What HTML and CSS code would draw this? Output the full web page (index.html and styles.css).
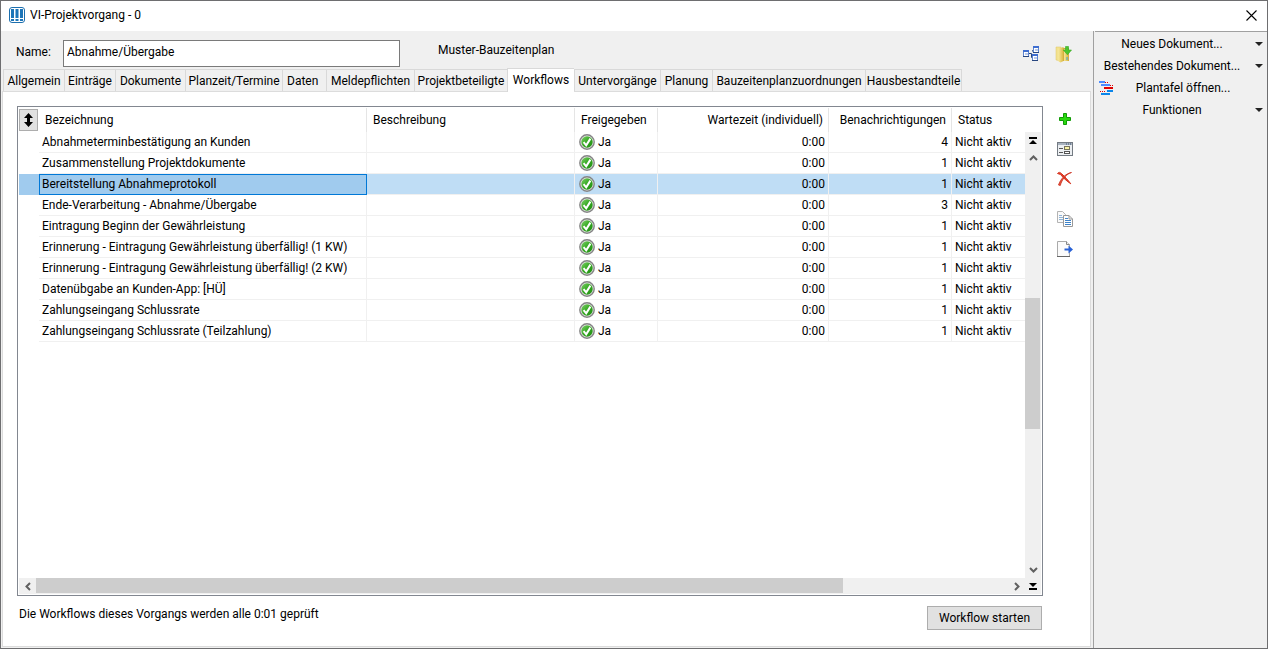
FILE: index.html
```
<!DOCTYPE html>
<html lang="de">
<head>
    <meta charset="UTF-8">
    <meta name="viewport" content="width=device-width, initial-scale=1.0">
    <title>VI-Projektvorgang - 0</title>
    <link rel="stylesheet" href="styles.css">
</head>
<body>
    <svg width="0" height="0" class="defs">
        <defs>
            <linearGradient id="green" x1="0" y1="0" x2="1" y2="1">
                <stop offset="0" stop-color="#7fd06a"/>
                <stop offset="0.5" stop-color="#35a822"/>
                <stop offset="1" stop-color="#1f8a12"/>
            </linearGradient>
            <linearGradient id="folder" x1="0" y1="0" x2="1" y2="0">
                <stop offset="0" stop-color="#f6e79a"/>
                <stop offset="1" stop-color="#d9b640"/>
            </linearGradient>
            <symbol id="check" viewBox="0 0 16 16">
                <circle cx="8" cy="8" r="7.2" fill="#e4e4e4" stroke="#858585" stroke-width="1.4"/>
                <circle cx="8" cy="8" r="5.7" fill="url(#green)"/>
                <path d="M4.6 8.2L7.2 11.4L11.4 4.6" fill="none" stroke="#fff" stroke-width="2"/>
            </symbol>
        </defs>
    </svg>
    <div class="window">
        <header class="titlebar">
            <svg class="logo" width="16" height="16" viewBox="0 0 16 16">
                <rect x="0.5" y="0.5" width="15" height="15" rx="2.5" fill="#fff" stroke="#1c6fae"/>
                <path d="M2 2h3v9H2zM6.500 2h3v9h-3zM11 2h3v9h-3zM2 12h3v2H2zM6.500 12h3v2h-3zM11 12h3v2h-3z" fill="#1c75b8"/>
            </svg>
            <h1>VI-Projektvorgang - 0</h1>
            <button class="close" type="button" aria-label="Schließen">
                <svg width="11" height="11" viewBox="0 0 11 11"><path d="M0.500 0.500L10.500 10.500M10.500 0.500L0.500 10.500" stroke="#000" stroke-width="1.1"/></svg>
            </button>
        </header>

        <div class="content">
            <main class="main">
                <div class="namebar">
                    <label for="name">Name:</label>
                    <input type="text" id="name" value="Abnahme/Übergabe">
                    <span class="plan">Muster-Bauzeitenplan</span>
                    <div class="namebar-icons">
                        <button type="button" aria-label="Struktur">
                            <svg width="17" height="16" viewBox="0 0 17 16">
                                <path d="M6 7.500H8.500M9.500 5.500V4.500H11M8.500 7.500V11.500H10" fill="none" stroke="#27467f"/>
                                <g fill="#fff" stroke="#5d84cf">
                                    <rect x="0.500" y="4.500" width="5" height="6"/>
                                    <rect x="10.500" y="0.500" width="5" height="6"/>
                                    <rect x="9.500" y="8.500" width="5" height="6"/>
                                </g>
                                <path d="M0 4h6v2H0zM10 0h6v2h-6zM9 8h6v2H9z" fill="#3f6ed0"/>
                                <path d="M2 7h3v2H2zM12 3h3v2h-3zM11 11h3v2h-3z" fill="#b9caec"/>
                                <path d="M0 10.500h6M10 6.500h6M9 14.500h6" stroke="#27467f"/>
                            </svg>
                        </button>
                        <button type="button" aria-label="Ordner hinzufügen">
                            <svg width="17" height="17" viewBox="0 0 17 17">
                                <path d="M1 1h5v14l-5-1z" fill="#f3e28f" stroke="#dfc565" stroke-width="0.500"/>
                                <path d="M6 2h8v13H6z" fill="#cda93a"/>
                                <path d="M3.500 2.500l5-1.500v14l-3 1.500-2-1z" fill="url(#folder)"/>
                                <path d="M9 3h4.500v12H9z" fill="url(#folder)"/>
                                <path d="M12 11v3" stroke="#3aa6dd"/>
                                <path d="M10.500 0.500h3v3.500H16.500L12.500 8.800 8.300 4h2.200z" fill="#4bc52f" stroke="#39ab22" stroke-width="0.600"/>
                            </svg>
                        </button>
                    </div>
                </div>

                <nav class="tabs">
                    <button type="button">Allgemein</button>
                    <button type="button">Einträge</button>
                    <button type="button">Dokumente</button>
                    <button type="button">Planzeit/Termine</button>
                    <button type="button" class="left">Daten</button>
                    <button type="button">Meldepflichten</button>
                    <button type="button">Projektbeteiligte</button>
                    <button type="button" class="active">Workflows</button>
                    <button type="button">Untervorgänge</button>
                    <button type="button">Planung</button>
                    <button type="button">Bauzeitenplanzuordnungen</button>
                    <button type="button">Hausbestandteile</button>
                </nav>

                <section class="panel">
                    <div class="work">
                        <div class="list">
                            <table>
                                <colgroup>
                                    <col class="c-mark">
                                    <col class="c-name">
                                    <col class="c-desc">
                                    <col class="c-free">
                                    <col class="c-wait">
                                    <col class="c-note">
                                    <col>
                                </colgroup>
                                <thead>
                                    <tr>
                                        <th class="mark">
                                            <button type="button" class="sort" aria-label="Sortierung">
                                                <svg width="9" height="14" viewBox="0 0 9 14"><path d="M4.500 0L9 5H6v4h3l-4.500 5L0 9h3V5H0z"/></svg>
                                            </button>
                                        </th>
                                        <th>Bezeichnung</th>
                                        <th>Beschreibung</th>
                                        <th>Freigegeben</th>
                                        <th class="num">Wartezeit (individuell)</th>
                                        <th class="num">Benachrichtigungen</th>
                                        <th>Status</th>
                                    </tr>
                                </thead>
                                <tbody>
                                    <tr><td></td><td>Abnahmeterminbestätigung an Kunden</td><td></td><td><svg class="ok"><use href="#check"/></svg>Ja</td><td class="num">0:00</td><td class="num">4</td><td>Nicht aktiv</td></tr>
                                    <tr><td></td><td>Zusammenstellung Projektdokumente</td><td></td><td><svg class="ok"><use href="#check"/></svg>Ja</td><td class="num">0:00</td><td class="num">1</td><td>Nicht aktiv</td></tr>
                                    <tr class="selected"><td></td><td>Bereitstellung Abnahmeprotokoll</td><td></td><td><svg class="ok"><use href="#check"/></svg>Ja</td><td class="num">0:00</td><td class="num">1</td><td>Nicht aktiv</td></tr>
                                    <tr><td></td><td>Ende-Verarbeitung - Abnahme/Übergabe</td><td></td><td><svg class="ok"><use href="#check"/></svg>Ja</td><td class="num">0:00</td><td class="num">3</td><td>Nicht aktiv</td></tr>
                                    <tr><td></td><td>Eintragung Beginn der Gewährleistung</td><td></td><td><svg class="ok"><use href="#check"/></svg>Ja</td><td class="num">0:00</td><td class="num">1</td><td>Nicht aktiv</td></tr>
                                    <tr><td></td><td>Erinnerung - Eintragung Gewährleistung überfällig! (1 KW)</td><td></td><td><svg class="ok"><use href="#check"/></svg>Ja</td><td class="num">0:00</td><td class="num">1</td><td>Nicht aktiv</td></tr>
                                    <tr><td></td><td>Erinnerung - Eintragung Gewährleistung überfällig! (2 KW)</td><td></td><td><svg class="ok"><use href="#check"/></svg>Ja</td><td class="num">0:00</td><td class="num">1</td><td>Nicht aktiv</td></tr>
                                    <tr><td></td><td>Datenübgabe an Kunden-App: [HÜ]</td><td></td><td><svg class="ok"><use href="#check"/></svg>Ja</td><td class="num">0:00</td><td class="num">1</td><td>Nicht aktiv</td></tr>
                                    <tr><td></td><td>Zahlungseingang Schlussrate</td><td></td><td><svg class="ok"><use href="#check"/></svg>Ja</td><td class="num">0:00</td><td class="num">1</td><td>Nicht aktiv</td></tr>
                                    <tr><td></td><td>Zahlungseingang Schlussrate (Teilzahlung)</td><td></td><td><svg class="ok"><use href="#check"/></svg>Ja</td><td class="num">0:00</td><td class="num">1</td><td>Nicht aktiv</td></tr>
                                </tbody>
                            </table>

                            <div class="vscroll">
                                <button type="button" aria-label="Zum Anfang"><svg width="8" height="8" viewBox="0 0 8 8"><path d="M0 0h8v2H0zM4 3l4 4H0z"/></svg></button>
                                <button type="button" aria-label="Nach oben"><svg width="9" height="6" viewBox="0 0 9 6"><path d="M1 5l3.500-3.500L8 5" class="arrow"/></svg></button>
                                <div class="vtrack"><div class="vthumb"></div></div>
                                <button type="button" aria-label="Nach unten"><svg width="9" height="6" viewBox="0 0 9 6"><path d="M1 1l3.500 3.500L8 1" class="arrow"/></svg></button>
                            </div>
                            <div class="hscroll">
                                <button type="button" aria-label="Nach links"><svg width="6" height="9" viewBox="0 0 6 9"><path d="M5 1L1.500 4.500L5 8" class="arrow"/></svg></button>
                                <div class="htrack"><div class="hthumb"></div></div>
                                <button type="button" aria-label="Nach rechts"><svg width="6" height="9" viewBox="0 0 6 9"><path d="M1 1l3.500 3.500L1 8" class="arrow"/></svg></button>
                            </div>
                            <button type="button" class="corner" aria-label="Zum Ende"><svg width="8" height="8" viewBox="0 0 8 8"><path d="M0 6h8v2H0zM4 5l4-4H0z"/></svg></button>
                        </div>

                        <div class="tools">
                            <button type="button" aria-label="Neu">
                                <svg width="16" height="16" viewBox="0 0 16 16"><path d="M6.500 2.500h3v4h4v3h-4v4h-3v-4h-4v-3h4z" fill="#29d80f" stroke="#119a06"/></svg>
                            </button>
                            <button type="button" aria-label="Bearbeiten">
                                <svg width="16" height="16" viewBox="0 0 16 16">
                                    <rect x="0.500" y="1.500" width="15" height="13" fill="#eceff2" stroke="#747b83"/>
                                    <path d="M1 2h14v2H1z" fill="#a9b3bf"/>
                                    <path d="M9 3h1M11 3h1M13 3h1" stroke="#38506e"/>
                                    <path d="M2 7.500h4M2 11.500h4" stroke="#555"/>
                                    <rect x="7.500" y="5.500" width="5" height="3" fill="#f8f3a5" stroke="#77735c"/>
                                    <rect x="7.500" y="10.500" width="5" height="2" fill="#fff" stroke="#555"/>
                                </svg>
                            </button>
                            <button type="button" aria-label="Löschen">
                                <svg width="16" height="16" viewBox="0 0 16 16">
                                    <path d="M0.500 2.500C2 0.500 3.500 1.500 5 3C8 6 11 9 13.800 12.800C10 10.500 6 6.500 3.500 3.500Z" fill="#e5402a" stroke="#d53420"/>
                                    <path d="M14.500 1.500C9.500 3 5 8 3.300 14.500L1.500 14C3.500 8 8.500 2.500 14.500 1.500Z" fill="#e8563f" stroke="#c92c1c" stroke-width="0.800"/>
                                </svg>
                            </button>
                            <button type="button" class="gap" aria-label="Kopieren">
                                <svg width="16" height="16" viewBox="0 0 16 16">
                                    <path d="M0.500 0.500h5l3 3v8h-8z" fill="#fafafa" stroke="#b3b3b3"/>
                                    <path d="M2 4.500h3M2 6.500h5M2 8.500h5" stroke="#8fb4d8"/>
                                    <path d="M6.500 4.500h5.500l3.500 3.500v7.500h-9z" fill="#fff" stroke="#999"/>
                                    <path d="M12 4.500v3.500h3.500" fill="none" stroke="#999"/>
                                    <path d="M8 7.500h3M8 9.500h6M8 11.500h6M8 13.500h6" stroke="#3f83c8"/>
                                </svg>
                            </button>
                            <button type="button" aria-label="Exportieren">
                                <svg width="16" height="16" viewBox="0 0 16 16">
                                    <path d="M0.500 0.500h9l3 3v12h-12z" fill="#fbfbfb" stroke="#aaa"/>
                                    <path d="M9.500 0.500v3h3" fill="#eee" stroke="#888"/>
                                    <path d="M0 15.500h13" stroke="#666"/>
                                    <path d="M7.500 7.500h4v-3l4.500 4-4.500 4v-3h-4z" fill="#2861d6"/>
                                </svg>
                            </button>
                        </div>
                    </div>

                    <footer class="bottom">
                        <span>Die Workflows dieses Vorgangs werden alle 0:01 geprüft</span>
                        <button type="button" class="start">Workflow starten</button>
                    </footer>
                </section>
            </main>

            <aside class="side">
                <button type="button"><i></i><span>Neues Dokument...</span><i class="drop"></i></button>
                <button type="button"><i></i><span>Bestehendes Dokument...</span><i class="drop"></i></button>
                <button type="button" class="board">
                    <svg width="16" height="16" viewBox="0 0 16 16">
                        <path d="M0 1h6v2H0zM2 4h9v2H2z" fill="#4d8dff"/>
                        <path d="M6 2.500h1M8 2.500h1M11 5.500h1M13 5.500h1M1 11.500h1M3 11.500h1M5 11.500h1" stroke="#e00000"/>
                        <path d="M5 7h9v2H5z" fill="#e00000"/>
                        <path d="M8 10h6v2H8zM2 13h9v2H2z" fill="#0b86ea"/>
                    </svg>
                    <span>Plantafel öffnen...</span><i></i>
                </button>
                <button type="button"><i></i><span>Funktionen</span><i class="drop"></i></button>
            </aside>
        </div>
    </div>
</body>
</html>
```
FILE: styles.css
```
* {
    box-sizing: border-box;
}

body {
    margin: 0;
    font-family: Roboto, "Open Sans", sans-serif;
    font-size: 12px;
    line-height: 16px;
    color: #000;
}

button {
    font: inherit;
    color: inherit;
    border: 0;
    padding: 0;
    background: none;
}

svg {
    display: block;
    flex: none;
}

.defs {
    position: absolute;
}

.window {
    display: flex;
    flex-direction: column;
    min-height: 100vh;
    border: 1px solid #6e6e70;
    background: #f0f0f0;
}

.titlebar {
    display: flex;
    align-items: center;
    height: 30px;
    padding: 0 10px 2px 8px;
    background: #fff;
}

.titlebar h1 {
    flex: 1;
    margin: 0 0 0 5px;
    font-size: 12px;
    font-weight: normal;
}

.content {
    display: flex;
    flex: 1;
}

.main {
    display: flex;
    flex-direction: column;
    flex: 1;
    min-width: 0;
    padding: 0 2px 1px 1px;
    border-right: 1px solid #a0a0a0;
}

/* Kopfzeile */
.namebar {
    display: flex;
    align-items: center;
    height: 36px;
    padding: 8px 19px 0 14px;
}

.namebar label {
    width: 47px;
    padding-bottom: 2px;
}

.namebar input {
    width: 337px;
    height: 27px;
    padding: 0 3px 3px;
    border: 1px solid #7a7a7a;
    font: inherit;
}

.plan {
    flex: 1;
    padding: 0 0 6px 38px;
}

.namebar-icons {
    display: flex;
    gap: 15px;
    padding-top: 2px;
}

/* Reiter */
.tabs {
    display: grid;
    grid-template-columns: 61px 51px 70px 97px 44px 88px 93px 67px 86px 52px 153px 97px;
    align-items: end;
    height: 24px;
    padding-left: 1px;
}

.tabs button {
    height: 22px;
    padding-top: 1px;
    border: 1px solid #d9d9d9;
    border-width: 1px 0 0 1px;
    white-space: nowrap;
}

.tabs button:last-child {
    border-right-width: 1px;
}

.tabs .left {
    padding-left: 4px;
    text-align: left;
}

.tabs .active {
    height: 24px;
    padding: 0 0 2px;
    margin-bottom: -1px;
    background: #fff;
    z-index: 1;
}

.panel {
    display: flex;
    flex-direction: column;
    flex: 1;
    padding: 14px 0 0 14px;
    border: 1px solid #dcdcdc;
    background: #fff;
}

.work {
    display: flex;
    flex: 1;
}

/* Liste */
.list {
    display: grid;
    grid-template-columns: 1fr 16px;
    grid-template-rows: 24px 1fr 16px;
    flex: 1;
    min-width: 0;
    padding: 1px;
    border: 1px solid #828790;
}

table {
    grid-area: 1 / 1 / 3 / 2;
    align-self: start;
    width: 100%;
    table-layout: fixed;
    border-collapse: separate;
    border-spacing: 0;
}

.c-mark { width: 20px; }
.c-name { width: 328px; }
.c-desc { width: 208px; }
.c-free { width: 83px; }
.c-wait { width: 171px; }
.c-note { width: 123px; }

th {
    height: 24px;
    padding: 0 5px 0 6px;
    border-right: 1px solid #e5e5e5;
    font-weight: normal;
    text-align: left;
    white-space: nowrap;
}

th:last-child,
th.mark {
    border-right: 0;
}

th.mark {
    padding: 0;
}

.sort {
    display: flex;
    align-items: center;
    justify-content: center;
    width: 19px;
    height: 22px;
    border: 1px solid #adadad;
    background: #e1e1e1;
}

td {
    height: 21px;
    padding: 0 3px;
    border-right: 1px solid #f0f0f0;
    border-bottom: 1px solid #f0f0f0;
    line-height: 20px;
    white-space: nowrap;
}

td:first-child {
    border-color: transparent;
    border-right: 0;
}

td:last-child {
    border-right: 0;
}

th.num,
td.num {
    text-align: right;
}

.ok {
    display: inline-block;
    width: 16px;
    height: 16px;
    margin: 0 3px 0 1px;
    vertical-align: -4px;
}

.selected td {
    background: #bfddf5;
}

.selected td:first-child {
    background: #a0cbee;
}

.selected td:nth-child(2) {
    background: #a0cbee;
    outline: 1px solid #0078d7;
    outline-offset: -1px;
}

/* Bildlaufleisten */
.vscroll,
.hscroll,
.corner {
    background: #f0f0f0;
}

.vscroll button,
.hscroll button,
.corner {
    display: flex;
    align-items: center;
    justify-content: center;
}

.arrow {
    fill: none;
    stroke: #606060;
    stroke-width: 2;
}

.vscroll {
    grid-area: 2 / 2;
    display: flex;
    flex-direction: column;
}

.vscroll button {
    height: 17px;
}

.vtrack {
    flex: 1;
    padding-top: 132px;
}

.vthumb {
    width: 15px;
    height: 131px;
    background: #cdcdcd;
}

.hscroll {
    grid-area: 3 / 1;
    display: flex;
}

.hscroll button {
    width: 17px;
}

.htrack {
    flex: 1;
}

.hthumb {
    width: 83%;
    height: 15px;
    background: #cdcdcd;
}

.corner {
    grid-area: 3 / 2;
}

.tools {
    display: flex;
    flex-direction: column;
    gap: 14px;
    width: 47px;
    padding: 5px 0 0 14px;
}

.tools button {
    width: 16px;
}

.tools .gap {
    margin-top: 10px;
}

.bottom {
    display: flex;
    align-items: flex-start;
    justify-content: space-between;
    height: 50px;
    padding: 10px 48px 0 2px;
}

.start {
    width: 115px;
    height: 24px;
    border: 1px solid #adadad;
    background: #e1e1e1;
}

/* Seitenleiste */
.side {
    width: 172px;
    margin-left: 1px;
    padding-top: 1px;
    border-top: 1px solid #a0a0a0;
}

.side button {
    display: grid;
    grid-template-columns: 16px 1fr 16px;
    align-items: center;
    width: 100%;
    height: 22px;
    padding: 0 0 0 4px;
    white-space: nowrap;
}

.side span {
    margin: 0 6px 0 -16px;
}

.side .board span {
    margin: 0;
}

.drop {
    justify-self: center;
    border: 4px solid transparent;
    border-top-color: #222;
    border-bottom: 0;
}
```
